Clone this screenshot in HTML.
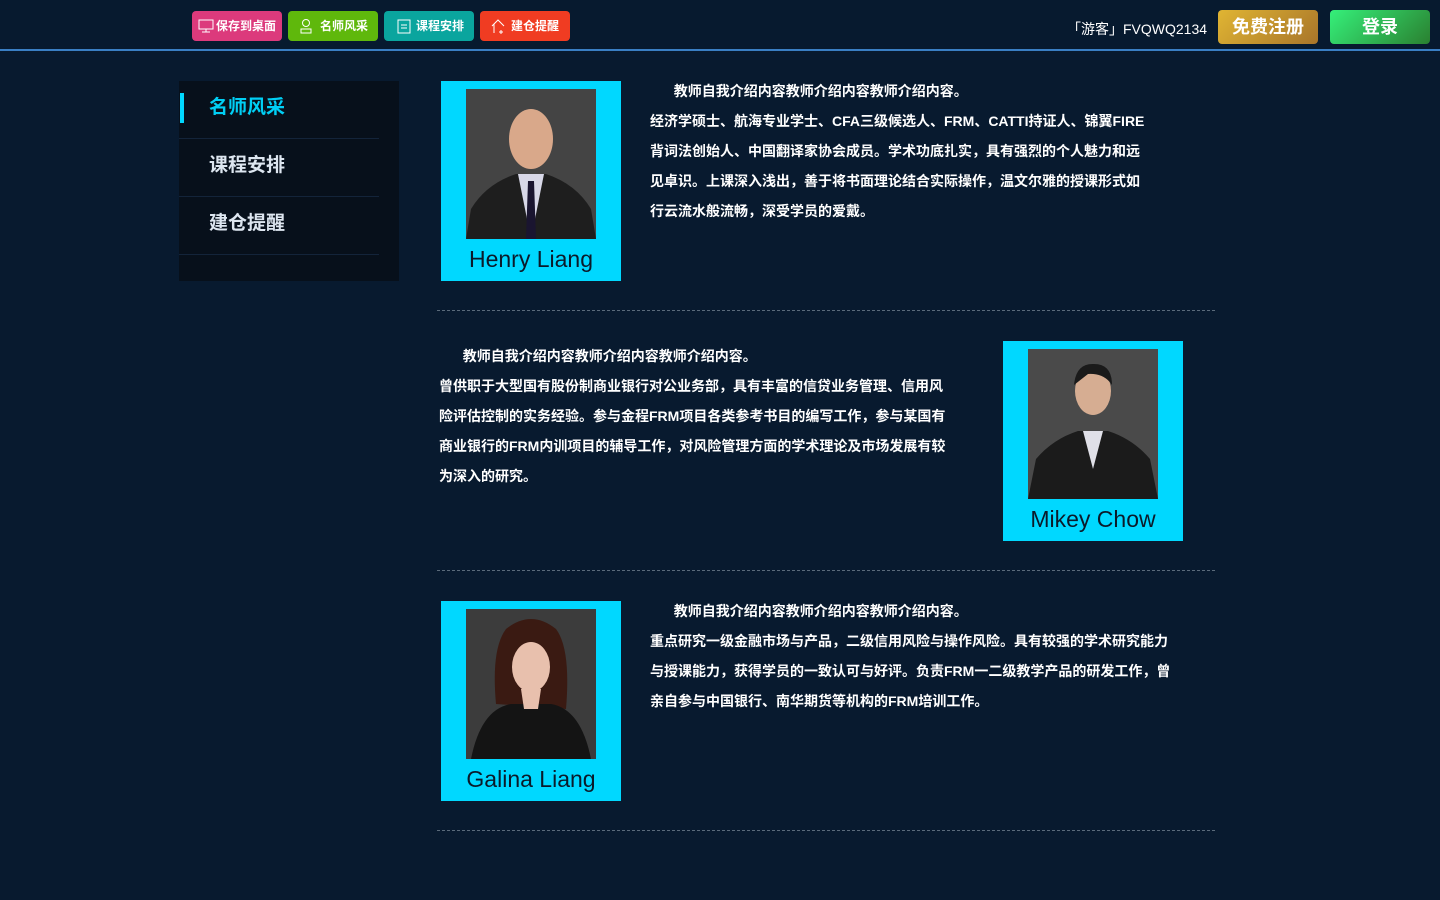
<!DOCTYPE html>
<html><head><meta charset="utf-8"><style>
*{margin:0;padding:0;box-sizing:border-box}
body{width:1440px;height:900px;background:#081a2f;font-family:"Liberation Sans","Noto Sans CJK SC",sans-serif;position:relative;overflow:hidden;color:#fff}
.top{position:absolute;left:0;top:0;width:1440px;height:51px;background:#071a2f;border-bottom:2px solid #3a7fc4}
.tb{position:absolute;top:11px;height:30px;border-radius:4px;font-size:12px;font-weight:bold;line-height:30px;color:#fff;padding-left:24px}
.tb svg{position:absolute;left:6px;top:7px}
.user{position:absolute;left:1067px;top:19px;font-size:14px}
.reg{position:absolute;left:1218px;top:10px;width:100px;height:34px;border-radius:4px;background:linear-gradient(135deg,#e0b533,#a8752a);font-size:18px;font-weight:bold;text-align:center;line-height:34px}
.login{position:absolute;left:1330px;top:10px;width:100px;height:34px;border-radius:4px;background:linear-gradient(135deg,#35f07a,#2a8030);font-size:18px;font-weight:bold;text-align:center;line-height:34px}
.side{position:absolute;left:179px;top:81px;width:220px;height:200px;background:#07101b}
.side div{position:absolute;left:0;width:200px;height:58px;border-bottom:1px solid #13243a;font-size:19px;font-weight:bold;color:#dde6f0;padding-left:30px;line-height:54px}
.card{position:absolute;width:180px;height:200px;background:#00d8ff}
.card svg.ph{position:absolute;left:25px;top:8px;width:130px;height:150px}
.card .nm{position:absolute;left:0;top:165px;width:180px;text-align:center;font-size:23px;color:#0b1a2a;font-family:"Liberation Sans",sans-serif}
.txt{position:absolute;font-size:14px;font-weight:bold;line-height:30px;white-space:nowrap}
.txt p:first-child{text-indent:1.7em}
.dash{position:absolute;left:437px;width:778px;border-top:1px dashed #5a6a7a}
</style></head><body>
<div class="top">
<div class="tb" style="left:192px;width:90px;background:#dc3a7c"><svg width="16" height="16"><rect x="1" y="2" width="14" height="9" fill="none" stroke="#fff"/><path d="M8 11v3M4 14h8" stroke="#fff"/></svg>保存到桌面</div>
<div class="tb" style="left:288px;width:90px;background:#5fb80c;padding-left:32px"><svg width="16" height="16" style="left:10px"><circle cx="8" cy="5" r="3.5" fill="none" stroke="#fff"/><path d="M3 15v-4h10v4z" fill="none" stroke="#fff"/></svg>名师风采</div>
<div class="tb" style="left:384px;width:90px;background:#0aa59e;padding-left:32px"><svg width="16" height="16" style="left:12px"><rect x="2" y="2" width="12" height="13" fill="none" stroke="#fff"/><path d="M5 7h6M5 10h6" stroke="#fff"/></svg>课程安排</div>
<div class="tb" style="left:480px;width:90px;background:#f03c22;padding-left:31px"><svg width="16" height="16" style="left:10px"><path d="M2 8L8 2l6 6M4 6v9M11 12v4M9 14h4" fill="none" stroke="#fff"/></svg>建仓提醒</div>
<div class="user">「游客」FVQWQ2134</div>
<div class="reg">免费注册</div>
<div class="login">登录</div>
</div>
<div class="side">
<div style="top:0;color:#00cff5"><span style="position:absolute;left:1px;top:12px;width:4px;height:30px;background:#00d8ff"></span>名师风采</div>
<div style="top:58px">课程安排</div>
<div style="top:116px">建仓提醒</div>
</div>
<div class="card" style="left:441px;top:81px"><svg class="ph" viewBox="0 0 130 150"><rect width="130" height="150" fill="#444"/><path d="M0 150L5 120Q20 95 50 85L80 85Q110 95 125 120L130 150Z" fill="#1e1e1e"/><path d="M52 85L65 150L78 85Z" fill="#d8d8e8"/><path d="M62 92L68 92L70 150L60 150Z" fill="#1a1530"/><ellipse cx="65" cy="50" rx="22" ry="30" fill="#d9a88a"/></svg><div class="nm">Henry Liang</div></div>
<div class="txt" style="left:650px;top:76px"><p>教师自我介绍内容教师介绍内容教师介绍内容。</p><p>经济学硕士、航海专业学士、CFA三级候选人、FRM、CATTI持证人、锦翼FIRE<br>背词法创始人、中国翻译家协会成员。学术功底扎实，具有强烈的个人魅力和远<br>见卓识。上课深入浅出，善于将书面理论结合实际操作，温文尔雅的授课形式如<br>行云流水般流畅，深受学员的爱戴。</p></div>
<div class="dash" style="top:310px"></div>
<div class="txt" style="left:439px;top:341px"><p>教师自我介绍内容教师介绍内容教师介绍内容。</p><p>曾供职于大型国有股份制商业银行对公业务部，具有丰富的信贷业务管理、信用风<br>险评估控制的实务经验。参与金程FRM项目各类参考书目的编写工作，参与某国有<br>商业银行的FRM内训项目的辅导工作，对风险管理方面的学术理论及市场发展有较<br>为深入的研究。</p></div>
<div class="card" style="left:1003px;top:341px"><svg class="ph" viewBox="0 0 130 150"><rect width="130" height="150" fill="#4a4a4a"/><path d="M0 150L8 110Q25 90 50 82L80 82Q105 90 122 110L130 150Z" fill="#1b1b1b"/><path d="M55 82L65 120L75 82Z" fill="#e0e0e8"/><ellipse cx="65" cy="42" rx="18" ry="24" fill="#d6ad92"/><path d="M46 36Q48 14 66 15Q84 15 84 36Q76 24 60 25Z" fill="#1a1a1a"/></svg><div class="nm">Mikey Chow</div></div>
<div class="dash" style="top:570px"></div>
<div class="card" style="left:441px;top:601px"><svg class="ph" viewBox="0 0 130 150"><rect width="130" height="150" fill="#3c3c3c"/><path d="M30 95Q25 40 40 20Q65 0 90 20Q105 40 100 100Z" fill="#3a1a12"/><path d="M5 150Q15 100 45 95L85 95Q115 100 125 150Z" fill="#141414"/><ellipse cx="65" cy="58" rx="19" ry="25" fill="#e8c0ad"/><path d="M55 80L75 80L72 100L58 100Z" fill="#e8c0ad"/></svg><div class="nm">Galina Liang</div></div>
<div class="txt" style="left:650px;top:596px"><p>教师自我介绍内容教师介绍内容教师介绍内容。</p><p>重点研究一级金融市场与产品，二级信用风险与操作风险。具有较强的学术研究能力<br>与授课能力，获得学员的一致认可与好评。负责FRM一二级教学产品的研发工作，曾<br>亲自参与中国银行、南华期货等机构的FRM培训工作。</p></div>
<div class="dash" style="top:830px"></div>
</body></html>
